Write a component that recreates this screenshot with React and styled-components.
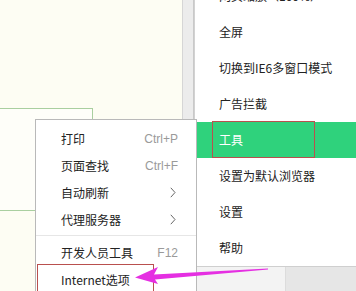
import React from "react";
import styled, { createGlobalStyle } from "styled-components";

const GlobalStyle = createGlobalStyle`
  html, body {
    margin: 0;
    padding: 0;
    background: #fdfdf3;
  }
  body {
    font-family: "Noto Sans CJK SC", "Liberation Sans", sans-serif;
    font-size: 12px;
    color: #222;
  }
`;

const Screen = styled.div`
  position: relative;
  width: 356px;
  height: 291px;
  overflow: hidden;
  display: grid;
  grid-template-columns: 182px 12px 162px;
  background: #fdfdf3;
`;

const Page = styled.div`
  padding-top: 108px;
`;

const PageBox = styled.div`
  width: 92px;
  height: 101px;
  border: 1px solid #a9cf9f;
  border-left: none;
  background: #fefef9;
`;

const Scrollbar = styled.div`
  background: #ececec;
  border-left: 1px solid #d6d6d6;
  border-right: 1px solid #c9c9c9;
`;

const Side = styled.div`
  display: flex;
  flex-direction: column;
  background: #fff;
  border-left: 1px solid #d2d2d2;
`;

const SideMenu = styled.ul`
  list-style: none;
  margin: -22px 0 0 0;
  padding: 0;
  background: #fff;
  border-bottom: 1px solid #cfcfcf;
`;

const SideItem = styled.li`
  position: relative;
  height: 36px;
  line-height: 36px;
  padding-left: 24px;
  white-space: nowrap;
  background: ${p => (p.$active ? "#2fd27c" : "transparent")};
  color: ${p => (p.$active ? "#fff" : "#222")};

  ${p =>
    p.$marked &&
    `
    &::after {
      content: "";
      position: absolute;
      left: 17px;
      top: -1px;
      width: 101px;
      height: 35px;
      border: 1px solid #b9504e;
    }
  `}
`;

const SideFoot = styled.div`
  flex: 1;
  display: grid;
  grid-template-columns: 91px 1fr;
`;

const FootLight = styled.div`
  background: #f3f3f3;
  border-right: 1px solid #dcdcdc;
`;

const FootDark = styled.div`
  background: #e6e6e6;
`;

const ContextMenu = styled.ul`
  position: absolute;
  left: 35px;
  top: 119px;
  width: 160px;
  margin: 0;
  padding: 5px 0 0 0;
  list-style: none;
  background: #fff;
  border: 1px solid #b9b9b9;
  z-index: 2;
`;

const MenuItem = styled.li`
  position: relative;
  display: flex;
  align-items: center;
  justify-content: space-between;
  height: 27px;
  padding: 0 18px 0 25px;
  white-space: nowrap;

  ${p =>
    p.$marked &&
    `
    &::after {
      content: "";
      position: absolute;
      left: 1px;
      top: -2px;
      width: 115px;
      height: 40px;
      border: 1px solid #b9504e;
    }
  `}
`;

const Shortcut = styled.span`
  color: #9a9a9a;
  font-family: "Liberation Sans", sans-serif;
  font-size: 12px;
`;

const Chevron = styled.svg`
  margin-right: 2px;
`;

const Separator = styled.li`
  height: 1px;
  margin: 2px 0 3px;
  background: #e6e6e6;
`;

const Arrow = styled.svg`
  position: absolute;
  left: 0;
  top: 0;
  z-index: 3;
  pointer-events: none;
`;

const sideItems = [
  "网页缩放（100%）",
  "全屏",
  "切换到IE6多窗口模式",
  "广告拦截",
  "工具",
  "设置为默认浏览器",
  "设置",
  "帮助",
];

const menuItems = [
  { label: "打印", hint: "Ctrl+P" },
  { label: "页面查找", hint: "Ctrl+F" },
  { label: "自动刷新", sub: true },
  { label: "代理服务器", sub: true },
  { sep: true },
  { label: "开发人员工具", hint: "F12" },
  { label: "Internet选项", marked: true },
];

const App = () => {
  return (
    <>
      <GlobalStyle />
      <Screen>
        <Page>
          <PageBox />
        </Page>
        <Scrollbar />
        <Side>
          <SideMenu>
            {sideItems.map(label => (
              <SideItem
                key={label}
                $active={label === "工具"}
                $marked={label === "工具"}
              >
                {label}
              </SideItem>
            ))}
          </SideMenu>
          <SideFoot>
            <FootLight />
            <FootDark />
          </SideFoot>
        </Side>

        <ContextMenu>
          {menuItems.map((item, i) =>
            item.sep ? (
              <Separator key={i} />
            ) : (
              <MenuItem key={item.label} $marked={item.marked}>
                <span>{item.label}</span>
                {item.hint && <Shortcut>{item.hint}</Shortcut>}
                {item.sub && (
                  <Chevron width="6" height="11" viewBox="0 0 6 11">
                    <path d="M0.8 0.8 L5 5.5 L0.8 10.2" fill="none" stroke="#666" strokeWidth="1" />
                  </Chevron>
                )}
              </MenuItem>
            )
          )}
        </ContextMenu>

        <Arrow width="356" height="291" viewBox="0 0 356 291">
          <path
            d="M135 277.5 L158 267 L154 274.5 L268 268.5 L268 269.5 L155 279.5 L158 284 Z"
            fill="#e52fe2"
          />
        </Arrow>
      </Screen>
    </>
  );
};

export default App;
